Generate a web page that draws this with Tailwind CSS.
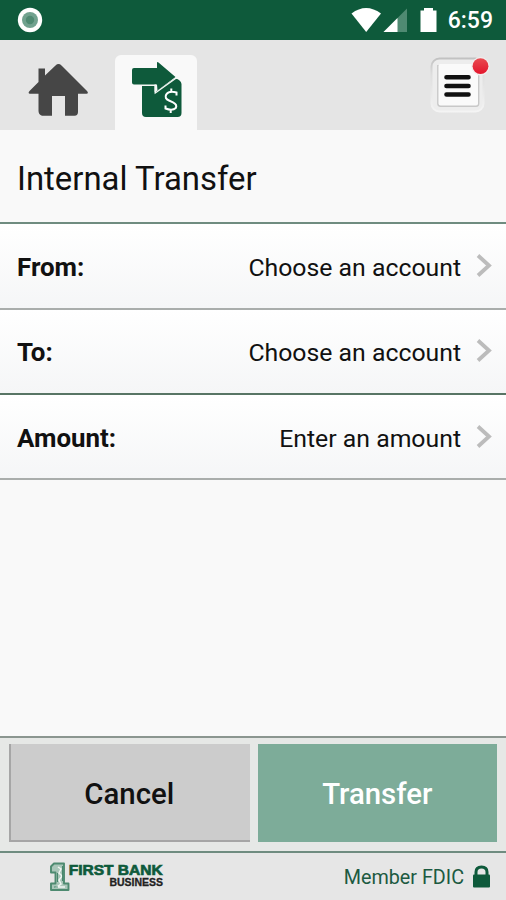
<!DOCTYPE html>
<html lang="en">
<head>
<meta charset="utf-8">
<title>Internal Transfer</title>
<script src="https://cdn.jsdelivr.net/npm/@tailwindcss/browser@4"></script>
</head>
<body class="bg-[#f9f9f9]">
<div class="flex h-[900px] w-[506px] flex-col overflow-hidden bg-[#f9f9f9] font-['Roboto',sans-serif] text-[#111]">

  <!-- Status bar -->
  <div class="flex h-10 shrink-0 items-center justify-between bg-[#0e5a3b] pl-[17px] pr-[13px]">
    <svg class="h-[26px] w-[26px]" viewBox="0 0 26 26"><circle cx="13" cy="13" r="12.2" fill="#fff"/><circle cx="13" cy="13" r="8" fill="#71a28f"/><circle cx="13" cy="13" r="4.2" fill="#4f8a72"/></svg>
    <div class="flex items-center">
      <svg class="h-10 w-[90px]" viewBox="350 0 90 40">
        <path d="M351.500 13.500Q366 2.500 381 13.500L366.200 32Z" fill="#fff"/>
        <path d="M407 8.500V32H383.500Z" fill="#4f8a72"/>
        <path d="M397.500 18V32H383.500Z" fill="#fff"/>
        <path d="M420.500 10.500H424V8H433V10.500H436.500V32H420.500Z" fill="#fff"/>
      </svg>
      <span class="ml-[8px] pt-[2px] text-[23px] font-medium leading-[38px] text-white">6:59</span>
    </div>
  </div>

  <!-- Tab header -->
  <div class="flex h-[90px] shrink-0 items-end bg-[#e5e5e5]">
    <div class="flex h-full w-[115px] items-start pl-[28px] pt-[23px]">
      <svg class="h-[54px] w-[61px]" viewBox="28 63 61 54"><path d="M55.500 65.500Q58.500 62.700 61.500 65.500L87 91Q89 93.500 86.500 93.800H78V112Q78 115.700 74.500 115.700H65V96H52V115.700H42Q38.500 114.500 38.500 111V93.800H30Q27.500 93.500 29.500 91L38.500 82V68.500H45V75.500Z" fill="#464646"/></svg>
    </div>
    <div class="h-[75px] w-[82px] rounded-t-[6px] bg-[#f9f9f9]">
      <svg class="h-[75px] w-[82px]" viewBox="115 55 82 75">
        <path d="M142 84H154.500V92.500L174.500 78.800Q177 78.500 179 80Q181.500 81.800 181.500 84V113Q181.500 117 177.500 117H146Q142 117 142 113Z" fill="#0e5a3b"/>
        <path d="M134 68H157V63Q157 61.500 158.500 62.500L175.500 77L157.500 90.500L157 84.500H134Q132 84.500 132 82.500V70Q132 68 134 68Z" fill="#0e5a3b"/>
        <path d="M142 85.200H155.300V93L178 76.800" fill="none" stroke="#f4f8f5" stroke-width="1.400"/>
        <path d="M176.500 95.500V92.500Q169 90.500 166.200 94.500Q164.200 98.500 169 100.500L173 102.300Q177.500 104.500 175.800 108Q172.500 111 165.500 108.500V105.500M171.300 88.500V92M170.700 109V113" fill="none" stroke="#fff" stroke-width="2"/>
      </svg>
    </div>
    <div class="ml-auto h-full pr-[10px] pt-[12px]">
      <svg class="h-[66px] w-[70px]" viewBox="426 52 70 66">
        <defs>
          <linearGradient id="bevel" x1="0" y1="0" x2="0" y2="1"><stop offset="0" stop-color="#c2c2c2"/><stop offset=".3" stop-color="#dedede"/><stop offset="1" stop-color="#f4f4f4"/></linearGradient>
          <linearGradient id="dot" x1="0" y1="0" x2="0" y2="1"><stop offset="0" stop-color="#e94a50"/><stop offset="1" stop-color="#e3152c"/></linearGradient>
        </defs>
        <rect x="431.500" y="58.500" width="52" height="53" rx="8" fill="#ededed" stroke="url(#bevel)" stroke-width="2"/>
        <path d="M438 65V103.500Q438 106 440.500 106H476Q478.500 106 478.500 103.500V66" fill="none" stroke="#c8c8c8" stroke-width="1.800"/>
        <rect x="438.500" y="64" width="39.500" height="41.500" rx="2" fill="#fafafa"/>
        <path d="M446.500 77.300H468.500M446.500 86H468.500M446.500 94.500H468.500" stroke="#111" stroke-width="4.600" stroke-linecap="round"/>
        <circle cx="480.500" cy="66.200" r="9.200" fill="#f3eded"/>
        <circle cx="480.500" cy="66.200" r="7.900" fill="url(#dot)"/>
      </svg>
    </div>
  </div>

  <h1 class="flex h-[92px] shrink-0 items-center pl-[17px] pt-[7px] text-[32.900px] leading-none">Internal Transfer</h1>

  <!-- Form rows -->
  <div class="flex h-[86px] shrink-0 items-center border-t-2 border-[#6f8c80] bg-linear-to-b from-white to-[#f5f6f7] pl-[17px] pr-[14px] pt-[3px]">
    <span class="pb-[2px] text-[25.900px] font-bold leading-9">From:</span>
    <span class="ml-auto text-[24.800px] leading-9">Choose an account</span>
    <svg class="mb-[5px] ml-[15px] h-[23px] w-[16px]" viewBox="0 0 16 23"><path d="M2 1.500L13 11.500L2 21.500" fill="none" stroke="#bcbcbc" stroke-width="3.800"/></svg>
  </div>
  <div class="flex h-[85px] shrink-0 items-center border-t-2 border-[#a9adab] bg-linear-to-b from-white to-[#f5f6f7] pl-[17px] pr-[14px] pt-[3px]">
    <span class="pb-[2px] text-[25.900px] font-bold leading-9">To:</span>
    <span class="ml-auto text-[24.800px] leading-9">Choose an account</span>
    <svg class="mb-[5px] ml-[15px] h-[23px] w-[16px]" viewBox="0 0 16 23"><path d="M2 1.500L13 11.500L2 21.500" fill="none" stroke="#bcbcbc" stroke-width="3.800"/></svg>
  </div>
  <div class="flex h-[87px] shrink-0 items-center border-y-2 border-b-[#a9adab] border-t-[#587565] bg-linear-to-b from-white to-[#f5f6f7] pl-[17px] pr-[14px] pt-[4px]">
    <span class="pb-[2px] text-[25.900px] font-bold leading-9">Amount:</span>
    <span class="ml-auto text-[24.800px] leading-9">Enter an amount</span>
    <svg class="mb-[5px] ml-[15px] h-[23px] w-[16px]" viewBox="0 0 16 23"><path d="M2 1.500L13 11.500L2 21.500" fill="none" stroke="#bcbcbc" stroke-width="3.800"/></svg>
  </div>

  <!-- Actions -->
  <div class="mt-auto flex h-[115px] shrink-0 gap-[8px] border-t-2 border-[#8b9690] bg-[#e6e8e6] px-[9px] pb-[9px] pt-[6px]">
    <button class="w-[241px] border-b-2 border-l-2 border-[#a6a6a6] bg-[#cccccc] pr-[2px] pt-[4px] text-[29.400px] font-medium leading-9">Cancel</button>
    <button class="w-[240px] bg-[#7dac99] pt-[2px] text-[29.400px] font-medium leading-9 text-white">Transfer</button>
  </div>

  <!-- Footer -->
  <div class="flex h-[49px] shrink-0 items-center border-t-2 border-[#6f8c80] bg-[#e6e6e6] pl-[48px] pr-[15px]">
    <svg class="h-[32px] w-[118px]" viewBox="48 860 118 32">
      <path d="M54 862.500H64V882.500H68.500V889H51V882.500H55.500V871.500H51V865.500Z" fill="#a9c6b9" stroke="#4d8a70" stroke-width="1.900" stroke-linejoin="round"/>
      <path d="M58 866L61 868L59 872L62 875L59 879L61 883L57 886H65" fill="none" stroke="#f0f5f2" stroke-width="1.500"/>
      <path d="M62.500 865V880M57.500 872V881M54 886H58" fill="none" stroke="#2f7658" stroke-width=".8"/>
      <text x="68.700" y="873.500" textLength="94" lengthAdjust="spacingAndGlyphs" font-family="Liberation Sans, sans-serif" font-weight="700" font-size="15" fill="#0e5a3b" stroke="#0e5a3b" stroke-width=".7">FIRST BANK</text>
      <text x="109.500" y="884.600" textLength="53.500" lengthAdjust="spacingAndGlyphs" font-family="Liberation Sans, sans-serif" font-weight="700" font-size="10" fill="#222" stroke="#222" stroke-width=".3">BUSINESS</text>
    </svg>
    <span class="ml-auto pt-[2px] text-[19.750px] text-[#1c5a41]">Member FDIC</span>
    <svg class="ml-[8px] h-[24px] w-[19px]" viewBox="472 864 19 24"><path d="M476 875V871Q476 866 481.500 866Q487 866 487 871V875" fill="none" stroke="#0e5a3b" stroke-width="3"/><rect x="473" y="873.500" width="17" height="13" rx="1" fill="#0e5a3b"/></svg>
  </div>
</div>
</body>
</html>
